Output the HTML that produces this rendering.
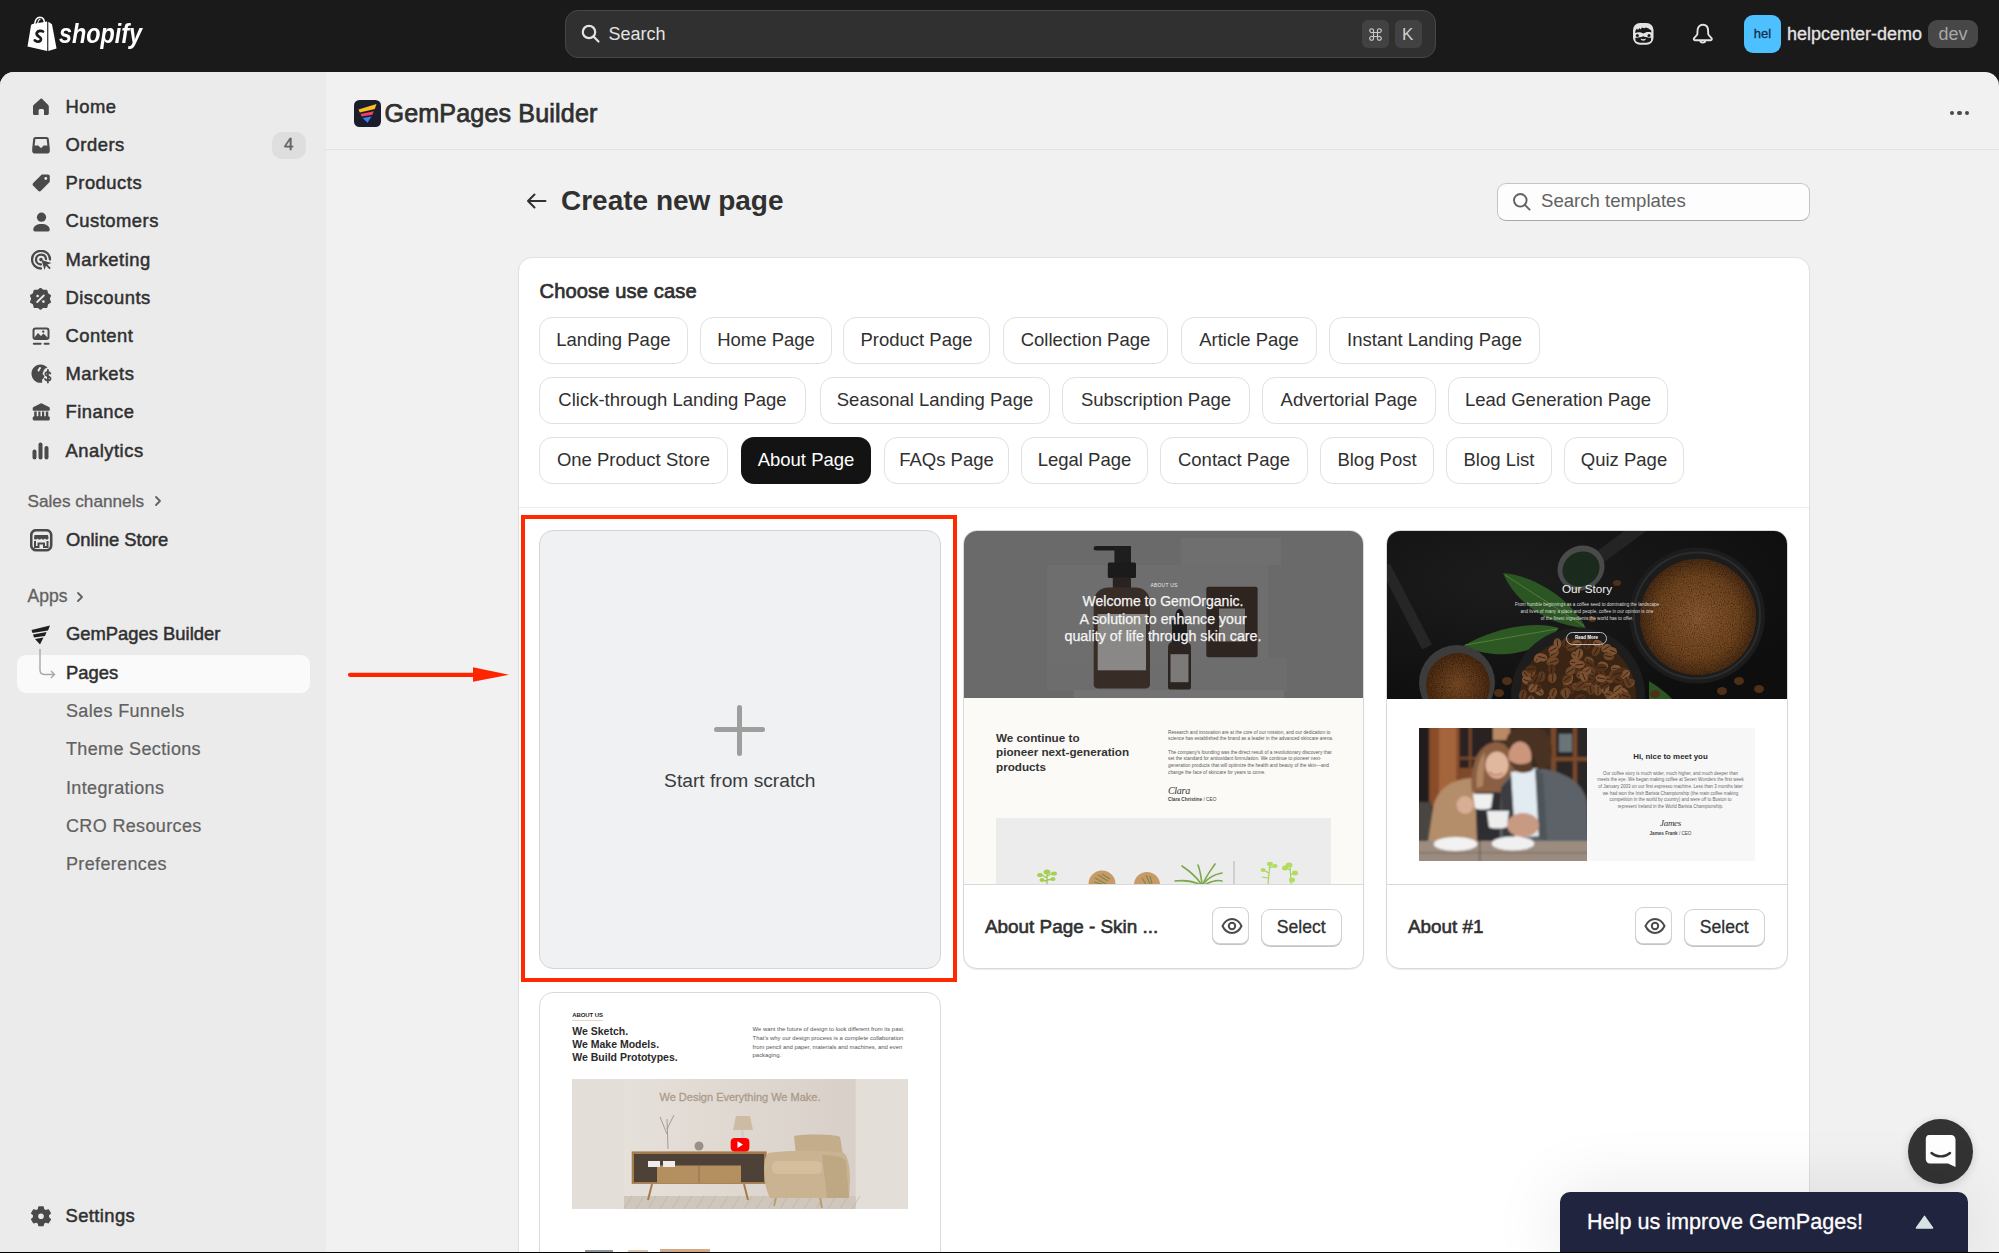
<!DOCTYPE html><html><head><meta charset="utf-8"><style>
html,body{margin:0;padding:0;width:1999px;height:1253px;overflow:hidden;background:#1a1a1a;font-family:"Liberation Sans",sans-serif;}
.t{position:absolute;white-space:nowrap;line-height:1;}
svg{position:absolute;overflow:hidden}
</style></head><body>
<div style="position:absolute;left:0px;top:72px;width:1999px;height:1180px;background:#f1f1f1;border-radius:14px 14px 0 0;overflow:hidden"></div>
<div style="position:absolute;left:0px;top:72px;width:326px;height:1180px;background:#ebebeb;border-radius:14px 0 0 0"></div>
<svg style="left:27px;top:16px" width="31" height="36" viewBox="0 0 31 36">
<path d="M0.5 30.5 L4 9.5 C4.2 8.6 4.8 8.2 5.6 8 L20.2 5.5 L20.2 35 Z" fill="#fff"/>
<path d="M21.3 5.8 L25 8.2 L29.5 32.5 L21.3 35 Z" fill="#fff"/>
<path d="M7.5 9 C8 4 10 1.2 13 1.2 C15.8 1.2 17.4 3.5 17.8 7.5" stroke="#fff" stroke-width="1.6" fill="none"/>
<path d="M10.5 8.3 C11 5 12 3.2 13.5 3" stroke="#fff" stroke-width="1.2" fill="none"/>
<path d="M16 15.5 C14.5 14.5 11 14.3 9.8 16.8 C8.8 19.3 11.5 20.3 13 21.3 C14.6 22.3 14.2 25.5 11.8 25.7 C10.2 25.8 8.8 25 7.8 24.3" stroke="#1a1a1a" stroke-width="2.7" fill="none" stroke-linecap="round"/>
</svg><div class="t " style="left:59.0px;top:20.2px;font-size:27.5px;font-weight:700;color:#fff;font-style:italic;transform:scaleX(0.85);transform-origin:0 0">shopify</div>
<div style="position:absolute;left:564.8px;top:9.5px;width:871px;height:48.5px;box-sizing:border-box;background:#303030;border:1.5px solid #474747;border-radius:13px"></div>
<svg style="left:581px;top:24px" width="20" height="20" viewBox="0 0 20 20"><circle cx="8" cy="8" r="6.2" stroke="#e3e3e3" stroke-width="2.2" fill="none"/><path d="M12.5 12.5 L17.5 17.5" stroke="#e3e3e3" stroke-width="2.2" stroke-linecap="round"/></svg><div class="t " style="left:608.5px;top:25.3px;font-size:18px;font-weight:400;color:#e3e3e3;">Search</div>
<div style="position:absolute;left:1362px;top:20px;width:27px;height:28px;background:#424242;border-radius:6px"></div>
<div style="position:absolute;left:1395px;top:20px;width:27px;height:28px;background:#424242;border-radius:6px"></div>
<svg style="left:1369px;top:27.5px" width="13" height="13" viewBox="0 0 13 13"><path d="M4.5 4.5 H8.5 V8.5 H4.5 Z M4.5 4.5 V3 A1.9 1.9 0 1 0 3 4.5 H4.5 M8.5 4.5 V3 A1.9 1.9 0 1 1 10 4.5 H8.5 M4.5 8.5 V10 A1.9 1.9 0 1 1 3 8.5 H4.5 M8.5 8.5 V10 A1.9 1.9 0 1 0 10 8.5 H8.5" stroke="#c8c8c8" stroke-width="1.2" fill="none"/></svg><div class="t " style="left:1402.0px;top:26.1px;font-size:17px;font-weight:400;color:#cfcfcf;">K</div>
<svg style="left:1633px;top:23px" width="21" height="22" viewBox="0 0 21 22">
<rect x="0" y="0" width="20.5" height="21.7" rx="7" fill="#e3e3e3"/>
<path d="M2.2 10 L2.5 7.5 L4 5.5 L5 7 L6.5 5 L7.5 6.5 L9 4.5 L11 5.2 L13 4.6 L15.5 5.5 L18.3 7.5 L18.3 9.5 C15 8.5 12.5 9.2 10.3 10.6 C8 9.2 5 8.8 2.2 10 Z" fill="#1a1a1a"/>
<circle cx="4.4" cy="12.6" r="1.5" fill="#1a1a1a"/><circle cx="16" cy="12.6" r="1.5" fill="#1a1a1a"/>
<path d="M2.3 14.8 C5 14.6 8 14.2 10.3 13.2 C12.5 14.2 15.5 14.6 18.2 14.8 L18 17.5 C17 19.3 15 19.8 10.3 19.8 C5.5 19.8 3.5 19.3 2.5 17.5 Z" fill="#1a1a1a"/>
<path d="M7.5 15.6 C9.5 16.3 11 16.3 13 15.6 C12.5 17.3 11.5 17.8 10.3 17.8 C9 17.8 8 17.3 7.5 15.6 Z" fill="#e3e3e3"/>
</svg><svg style="left:1692px;top:23px" width="22" height="23" viewBox="0 0 22 23">
<path d="M5.5 8 C5.5 4 7.8 1.8 10.8 1.8 C13.8 1.8 16.1 4 16.1 8 L16.3 11.5 L19.5 15.2 C20.2 16 19.8 17.2 18.7 17.2 L2.9 17.2 C1.8 17.2 1.4 16 2.1 15.2 L5.3 11.5 Z" fill="none" stroke="#e3e3e3" stroke-width="1.9" stroke-linejoin="round"/>
<path d="M8.3 17.5 C8.3 20.3 13.3 20.3 13.3 17.5" fill="none" stroke="#e3e3e3" stroke-width="1.9"/>
</svg><div style="position:absolute;left:1744px;top:15px;width:37px;height:38px;background:#4dc0ff;border-radius:9px"></div>
<div class="t" style="left:1462.5px;width:600px;text-align:center;top:27.3px;font-size:13px;font-weight:400;color:#12304a;-webkit-text-stroke:0.3px #12304a">hel</div>
<div class="t " style="left:1787.0px;top:24.8px;font-size:18px;font-weight:400;color:#e3e3e3;-webkit-text-stroke:0.3px #e3e3e3">helpcenter-demo</div>
<div style="position:absolute;left:1928px;top:20px;width:50px;height:28px;background:#474747;border-radius:9px"></div>
<div class="t" style="left:1653.0px;width:600px;text-align:center;top:24.5px;font-size:18px;font-weight:400;color:#a8a8a8;">dev</div>
<div class="t " style="left:65.5px;top:97.8px;font-size:18.4px;font-weight:400;color:#303030;-webkit-text-stroke:0.5px #303030;letter-spacing:0.5px">Home</div>
<svg style="left:32.4px;top:98px" width="22" height="22" viewBox="0 0 22 22"><path d="M8.6 0.8 C9 0.4 9.6 0.4 10 0.8 L16.2 7 C16.6 7.4 16.8 8 16.8 8.6 L16.8 15.5 C16.8 16.4 16.1 17 15.3 17 L12 17 L12 12.5 C12 11.6 11.2 11 10.3 11 L8.3 11 C7.4 11 6.6 11.6 6.6 12.5 L6.6 17 L2.5 17 C1.6 17 1 16.4 1 15.5 L1 8.6 C1 8 1.2 7.4 1.6 7 Z" fill="#4a4a4a"/></svg>
<div class="t " style="left:65.5px;top:136.0px;font-size:18.4px;font-weight:400;color:#303030;-webkit-text-stroke:0.5px #303030;letter-spacing:0.5px">Orders</div>
<svg style="left:32px;top:136px" width="22" height="22" viewBox="0 0 22 22"><path d="M3.5 1 L14.5 1 C15.8 1 16.6 1.8 16.8 3 L17.8 12.5 L17.8 15 C17.8 16.4 16.9 17.5 15.5 17.5 L2.5 17.5 C1.1 17.5 0.2 16.4 0.2 15 L0.2 12.5 L1.2 3 C1.4 1.8 2.2 1 3.5 1 Z M3.4 3 L2.6 9.5 L6 9.5 C6.6 9.5 7 9.9 7.3 10.5 C7.8 11.4 8.4 11.8 9 11.8 C9.6 11.8 10.2 11.4 10.7 10.5 C11 9.9 11.4 9.5 12 9.5 L15.4 9.5 L14.6 3 Z" fill="#4a4a4a" fill-rule="evenodd"/></svg>
<div class="t " style="left:65.5px;top:174.2px;font-size:18.4px;font-weight:400;color:#303030;-webkit-text-stroke:0.5px #303030;letter-spacing:0.5px">Products</div>
<svg style="left:32px;top:173.8px" width="22" height="22" viewBox="0 0 22 22"><path d="M11 0.5 L16 0.5 C17 0.5 17.8 1.3 17.8 2.3 L17.8 7 C17.8 7.6 17.6 8.1 17.2 8.5 L9 16.8 C8.2 17.6 7 17.6 6.2 16.8 L1.2 11.8 C0.4 11 0.4 9.8 1.2 9 L9.5 0.8 C9.9 0.5 10.4 0.5 11 0.5 Z" fill="#4a4a4a"/><circle cx="13.8" cy="4.5" r="1.4" fill="#ebebeb"/></svg>
<div class="t " style="left:65.5px;top:212.4px;font-size:18.4px;font-weight:400;color:#303030;-webkit-text-stroke:0.5px #303030;letter-spacing:0.5px">Customers</div>
<svg style="left:32.5px;top:211.5px" width="22" height="22" viewBox="0 0 22 22"><circle cx="8.5" cy="5.2" r="4.6" fill="#4a4a4a"/><path d="M0.3 17.5 C0.3 14 4 12 8.5 12 C13 12 16.7 14 16.7 17.5 C16.7 18.8 16.2 19.5 15 19.5 L2 19.5 C0.8 19.5 0.3 18.8 0.3 17.5 Z" fill="#4a4a4a"/></svg>
<div class="t " style="left:65.5px;top:250.6px;font-size:18.4px;font-weight:400;color:#303030;-webkit-text-stroke:0.5px #303030;letter-spacing:0.5px">Marketing</div>
<svg style="left:30.5px;top:250px" width="22" height="22" viewBox="0 0 22 22"><path d="M10 18.5 C5 18.5 1 14.5 1 9.5 C1 4.5 5 0.8 10 0.8 C15 0.8 19 4.5 19 9.5" fill="none" stroke="#4a4a4a" stroke-width="2.3" stroke-linecap="round"/><path d="M10 14.5 C7.2 14.5 5 12.3 5 9.5 C5 6.8 7.2 4.7 10 4.7 C12.6 4.7 14.7 6.5 15 9" fill="none" stroke="#4a4a4a" stroke-width="2.3" stroke-linecap="round"/><circle cx="10" cy="9.6" r="1.8" fill="#4a4a4a"/><path d="M10.5 10 L20.5 13 L16.3 14.5 L19.8 18 L18.5 19.3 L15 15.8 L13.5 20 Z" fill="#4a4a4a"/></svg>
<div class="t " style="left:65.5px;top:288.8px;font-size:18.4px;font-weight:400;color:#303030;-webkit-text-stroke:0.5px #303030;letter-spacing:0.5px">Discounts</div>
<svg style="left:30px;top:287.5px" width="22" height="22" viewBox="0 0 22 22"><path d="M10.5 0.5 L13.2 2.6 L16.6 2.4 L17.4 5.7 L20.3 7.6 L19 10.8 L20.3 14 L17.4 15.9 L16.6 19.2 L13.2 19 L10.5 21.1 L7.8 19 L4.4 19.2 L3.6 15.9 L0.7 14 L2 10.8 L0.7 7.6 L3.6 5.7 L4.4 2.4 L7.8 2.6 Z" fill="#4a4a4a" stroke="#4a4a4a" stroke-width="1.5" stroke-linejoin="round"/><path d="M7.2 14 L13.8 7.5" stroke="#ebebeb" stroke-width="1.8" stroke-linecap="round"/><circle cx="7.6" cy="8" r="1.3" fill="#ebebeb"/><circle cx="13.4" cy="13.6" r="1.3" fill="#ebebeb"/></svg>
<div class="t " style="left:65.5px;top:327.0px;font-size:18.4px;font-weight:400;color:#303030;-webkit-text-stroke:0.5px #303030;letter-spacing:0.5px">Content</div>
<svg style="left:32px;top:327px" width="22" height="22" viewBox="0 0 22 22"><rect x="0.5" y="0.5" width="17" height="12.5" rx="3" fill="#4a4a4a"/><path d="M2.5 10.5 L6 6 L9 9 L11.5 6.5 L15.5 10.5 L15.5 3.5 C15.5 3 15 2.5 14.5 2.5 L3.5 2.5 C3 2.5 2.5 3 2.5 3.5 Z" fill="#ebebeb"/><circle cx="11.2" cy="4.6" r="1.2" fill="#4a4a4a"/><rect x="0.8" y="15.7" width="8.8" height="2" rx="1" fill="#4a4a4a"/><rect x="11.6" y="15.7" width="6" height="2" rx="1" fill="#4a4a4a"/></svg>
<div class="t " style="left:65.5px;top:365.2px;font-size:18.4px;font-weight:400;color:#303030;-webkit-text-stroke:0.5px #303030;letter-spacing:0.5px">Markets</div>
<svg style="left:30.5px;top:363.5px" width="22" height="22" viewBox="0 0 22 22"><path d="M9.5 0.5 C12.5 0.5 15 1.8 16.5 4 L14 4.5 L12.5 7 L11.5 10 L13.5 12 L12.5 14.5 L11 15.8 L11.3 18.6 C10.7 18.8 10.1 18.8 9.5 18.8 C4.5 18.8 0.5 14.8 0.5 9.7 C0.5 4.5 4.5 0.5 9.5 0.5 Z" fill="#4a4a4a"/><path d="M9 4 L7.5 6.5" stroke="#ebebeb" stroke-width="2" stroke-linecap="round"/><path d="M19.3 9.5 C18.8 8.5 17.8 8 16.7 8 C15.3 8 14.3 8.8 14.3 10 C14.3 12.5 19.5 11.7 19.5 14.5 C19.5 15.8 18.3 16.6 16.8 16.6 C15.5 16.6 14.5 16 14 15 M16.9 6 L16.9 18.5" stroke="#4a4a4a" stroke-width="1.8" fill="none" stroke-linecap="round"/></svg>
<div class="t " style="left:65.5px;top:403.4px;font-size:18.4px;font-weight:400;color:#303030;-webkit-text-stroke:0.5px #303030;letter-spacing:0.5px">Finance</div>
<svg style="left:32px;top:402.5px" width="22" height="22" viewBox="0 0 22 22"><path d="M8.6 0.5 C9 0.3 9.5 0.3 9.9 0.5 L17 4 C17.5 4.3 17.8 4.8 17.8 5.3 L17.8 6.7 C17.8 7.3 17.3 7.8 16.7 7.8 L1.8 7.8 C1.2 7.8 0.7 7.3 0.7 6.7 L0.7 5.3 C0.7 4.8 1 4.3 1.5 4 Z" fill="#4a4a4a"/><rect x="2.2" y="8.5" width="2.5" height="5.5" fill="#4a4a4a"/><rect x="6.3" y="8.5" width="2.2" height="5.5" fill="#4a4a4a"/><rect x="10" y="8.5" width="2.2" height="5.5" fill="#4a4a4a"/><rect x="13.8" y="8.5" width="2.5" height="5.5" fill="#4a4a4a"/><rect x="0.7" y="13.3" width="17.1" height="4.3" rx="1.5" fill="#4a4a4a"/></svg>
<div class="t " style="left:65.5px;top:441.6px;font-size:18.4px;font-weight:400;color:#303030;-webkit-text-stroke:0.5px #303030;letter-spacing:0.5px">Analytics</div>
<svg style="left:31.8px;top:441.5px" width="22" height="22" viewBox="0 0 22 22"><rect x="0.5" y="7.5" width="4" height="10" rx="2" fill="#4a4a4a"/><rect x="6.5" y="0.5" width="4" height="17" rx="2" fill="#4a4a4a"/><rect x="12.5" y="4" width="4" height="13.5" rx="2" fill="#4a4a4a"/></svg>
<div style="position:absolute;left:272px;top:132px;width:33.5px;height:27px;background:#dedede;border-radius:10px"></div>
<div class="t" style="left:-11.3px;width:600px;text-align:center;top:136.4px;font-size:17px;font-weight:400;color:#616161;-webkit-text-stroke:0.4px #616161">4</div>
<div class="t " style="left:27.5px;top:492.7px;font-size:17.2px;font-weight:400;color:#616161;-webkit-text-stroke:0.3px #616161;">Sales channels</div>
<svg style="left:153px;top:494px" width="10" height="14" viewBox="0 0 10 14"><path d="M3 3 L7 7 L3 11" stroke="#616161" stroke-width="1.8" fill="none" stroke-linecap="round" stroke-linejoin="round"/></svg>
<svg style="left:29.5px;top:528.5px" width="23" height="23" viewBox="0 0 23 23"><rect x="1.2" y="1.2" width="20" height="20" rx="5" fill="none" stroke="#4a4a4a" stroke-width="2.6"/><path d="M4.5 6 L18 6 L18.5 9 C18.5 10 17.7 10.6 16.8 10.6 C15.8 10.6 15.2 10 15 9.3 C14.7 10 14 10.6 13 10.6 C12 10.6 11.5 10 11.3 9.3 C11 10 10.4 10.6 9.5 10.6 C8.5 10.6 7.8 10 7.5 9.3 C7.3 10 6.6 10.6 5.7 10.6 C4.8 10.6 4 10 4 9 Z" fill="#4a4a4a"/><path d="M5 12 L5 18 L8.5 18 L8.5 14.5 L14 14.5 L14 18 L17.5 18 L17.5 12" fill="none" stroke="#4a4a4a" stroke-width="2"/></svg>
<div class="t " style="left:66.0px;top:530.6px;font-size:18.4px;font-weight:400;color:#303030;-webkit-text-stroke:0.5px #303030;">Online Store</div>
<div class="t " style="left:27.5px;top:588.4px;font-size:17.5px;font-weight:400;color:#616161;-webkit-text-stroke:0.3px #616161;">Apps</div>
<svg style="left:75px;top:590px" width="10" height="14" viewBox="0 0 10 14"><path d="M3 3 L7 7 L3 11" stroke="#616161" stroke-width="1.8" fill="none" stroke-linecap="round" stroke-linejoin="round"/></svg>
<svg style="left:31px;top:625px" width="20" height="20" viewBox="0 0 20 20"><path d="M0.5 5 L19 0.5 L17 5.5 L1.5 8 Z" fill="#1f1f1f"/><path d="M2 9.5 L15.5 7 L14 11 L3 12.5 Z" fill="#1f1f1f"/><path d="M4 14 L12.5 12.5 L9 19.5 Z" fill="#1f1f1f"/></svg>
<div class="t " style="left:66.0px;top:625.2px;font-size:18.4px;font-weight:400;color:#303030;-webkit-text-stroke:0.5px #303030;">GemPages Builder</div>
<div style="position:absolute;left:16.5px;top:654.5px;width:293.5px;height:38px;background:#fafafa;border-radius:9px"></div>
<svg style="left:38px;top:648px" width="20" height="32" viewBox="0 0 20 32"><path d="M2 1 L2 22 C2 25 3.5 26.5 6.5 26.5 L16 26.5" stroke="#a6a6a6" stroke-width="1.4" fill="none"/><path d="M13 23 L16.5 26.5 L13 30" stroke="#a6a6a6" stroke-width="1.4" fill="none"/></svg>
<div class="t " style="left:66.0px;top:663.6px;font-size:18.4px;font-weight:400;color:#303030;-webkit-text-stroke:0.5px #303030;">Pages</div>
<div class="t " style="left:66.0px;top:702.4px;font-size:18px;font-weight:400;color:#616161;letter-spacing:0.35px;-webkit-text-stroke:0.2px #616161">Sales Funnels</div>
<div class="t " style="left:66.0px;top:740.4px;font-size:18px;font-weight:400;color:#616161;letter-spacing:0.35px;-webkit-text-stroke:0.2px #616161">Theme Sections</div>
<div class="t " style="left:66.0px;top:778.5px;font-size:18px;font-weight:400;color:#616161;letter-spacing:0.35px;-webkit-text-stroke:0.2px #616161">Integrations</div>
<div class="t " style="left:66.0px;top:816.5px;font-size:18px;font-weight:400;color:#616161;letter-spacing:0.35px;-webkit-text-stroke:0.2px #616161">CRO Resources</div>
<div class="t " style="left:66.0px;top:854.6px;font-size:18px;font-weight:400;color:#616161;letter-spacing:0.35px;-webkit-text-stroke:0.2px #616161">Preferences</div>
<svg style="left:30px;top:1206px" width="22" height="22" viewBox="0 0 22 22"><path d="M9 1 L13 1 L13.6 3.6 L15.8 4.8 L18.3 3.9 L20.3 7.3 L18.3 9 L18.3 11.5 L20.3 13.3 L18.3 16.7 L15.8 15.8 L13.6 17 L13 19.6 L9 19.6 L8.4 17 L6.2 15.8 L3.7 16.7 L1.7 13.3 L3.7 11.5 L3.7 9 L1.7 7.3 L3.7 3.9 L6.2 4.8 L8.4 3.6 Z" fill="#4a4a4a" stroke="#4a4a4a" stroke-width="1.5" stroke-linejoin="round"/><circle cx="11" cy="10.3" r="2.8" fill="#ebebeb"/></svg>
<div class="t " style="left:65.5px;top:1206.9px;font-size:18.4px;font-weight:400;color:#303030;-webkit-text-stroke:0.5px #303030;letter-spacing:0.4px">Settings</div>
<div style="position:absolute;left:325px;top:148.5px;width:1674px;height:1px;background:#e3e3e3"></div>
<svg style="left:353.5px;top:99.5px" width="27" height="27" viewBox="0 0 27 27"><rect width="27" height="27" rx="5.5" fill="#1a1d2b"/><path d="M4.5 9.5 L22.5 4 L20.8 9 L5.8 12.6 Z" fill="#fbbf24"/><path d="M6.5 14 L19.7 11.2 L18.5 14.8 L7.6 16.6 Z" fill="#f43f5e"/><path d="M8.7 18 L17.5 16.6 L13.5 22.8 Z" fill="#3b82f6"/></svg>
<div class="t " style="left:384.5px;top:100.8px;font-size:25.1px;font-weight:400;color:#303030;-webkit-text-stroke:0.75px #303030;letter-spacing:0.15px">GemPages Builder</div>
<div style="position:absolute;left:1949.8px;top:110.7px;width:4.5px;height:4.5px;background:#4a4a4a;border-radius:50%"></div>
<div style="position:absolute;left:1957.3px;top:110.7px;width:4.5px;height:4.5px;background:#4a4a4a;border-radius:50%"></div>
<div style="position:absolute;left:1964.8px;top:110.7px;width:4.5px;height:4.5px;background:#4a4a4a;border-radius:50%"></div>
<svg style="left:526px;top:193px" width="21" height="16" viewBox="0 0 21 16"><path d="M19.5 8 L2 8 M8.5 1.5 L2 8 L8.5 14.5" stroke="#303030" stroke-width="2" fill="none" stroke-linecap="round" stroke-linejoin="round"/></svg>
<div class="t " style="left:561.0px;top:187.1px;font-size:28px;font-weight:700;color:#303030;letter-spacing:0px">Create new page</div>
<div style="position:absolute;left:1496.5px;top:182.5px;width:313px;height:38px;box-sizing:border-box;background:#fdfdfd;border:1.3px solid #c4c4c4;border-bottom-color:#a8a8a8;border-radius:9px"></div>
<svg style="left:1512px;top:191.5px" width="20" height="20" viewBox="0 0 20 20"><circle cx="8.3" cy="8.3" r="6.3" stroke="#616161" stroke-width="1.9" fill="none"/><path d="M12.8 12.8 L17.6 17.6" stroke="#616161" stroke-width="1.9" stroke-linecap="round"/></svg>
<div class="t " style="left:1541.0px;top:192.1px;font-size:18.6px;font-weight:400;color:#616161;">Search templates</div>
<div style="position:absolute;left:517.5px;top:256.5px;width:1292px;height:1100px;box-sizing:border-box;background:#fff;border:1px solid #e0e0e0;border-radius:14px;box-shadow:0 1px 2px rgba(0,0,0,0.04)"></div>
<div class="t " style="left:539.5px;top:281.3px;font-size:20.1px;font-weight:400;color:#303030;-webkit-text-stroke:0.7px #303030;letter-spacing:0.13px">Choose use case</div>
<div style="position:absolute;left:539px;top:316.5px;width:148.79999999999995px;height:47.5px;box-sizing:border-box;background:#fff;border:1.5px solid #e1e1e1;border-radius:13px"></div>
<div class="t" style="left:539px;width:148.79999999999995px;text-align:center;top:331.1px;font-size:18.5px;color:#303030">Landing Page</div>
<div style="position:absolute;left:700px;top:316.5px;width:132px;height:47.5px;box-sizing:border-box;background:#fff;border:1.5px solid #e1e1e1;border-radius:13px"></div>
<div class="t" style="left:700px;width:132px;text-align:center;top:331.1px;font-size:18.5px;color:#303030">Home Page</div>
<div style="position:absolute;left:843px;top:316.5px;width:147px;height:47.5px;box-sizing:border-box;background:#fff;border:1.5px solid #e1e1e1;border-radius:13px"></div>
<div class="t" style="left:843px;width:147px;text-align:center;top:331.1px;font-size:18.5px;color:#303030">Product Page</div>
<div style="position:absolute;left:1003px;top:316.5px;width:165px;height:47.5px;box-sizing:border-box;background:#fff;border:1.5px solid #e1e1e1;border-radius:13px"></div>
<div class="t" style="left:1003px;width:165px;text-align:center;top:331.1px;font-size:18.5px;color:#303030">Collection Page</div>
<div style="position:absolute;left:1181px;top:316.5px;width:136px;height:47.5px;box-sizing:border-box;background:#fff;border:1.5px solid #e1e1e1;border-radius:13px"></div>
<div class="t" style="left:1181px;width:136px;text-align:center;top:331.1px;font-size:18.5px;color:#303030">Article Page</div>
<div style="position:absolute;left:1329px;top:316.5px;width:211px;height:47.5px;box-sizing:border-box;background:#fff;border:1.5px solid #e1e1e1;border-radius:13px"></div>
<div class="t" style="left:1329px;width:211px;text-align:center;top:331.1px;font-size:18.5px;color:#303030">Instant Landing Page</div>
<div style="position:absolute;left:539px;top:376.5px;width:267px;height:47.5px;box-sizing:border-box;background:#fff;border:1.5px solid #e1e1e1;border-radius:13px"></div>
<div class="t" style="left:539px;width:267px;text-align:center;top:391.1px;font-size:18.5px;color:#303030">Click-through Landing Page</div>
<div style="position:absolute;left:820px;top:376.5px;width:230px;height:47.5px;box-sizing:border-box;background:#fff;border:1.5px solid #e1e1e1;border-radius:13px"></div>
<div class="t" style="left:820px;width:230px;text-align:center;top:391.1px;font-size:18.5px;color:#303030">Seasonal Landing Page</div>
<div style="position:absolute;left:1062px;top:376.5px;width:188px;height:47.5px;box-sizing:border-box;background:#fff;border:1.5px solid #e1e1e1;border-radius:13px"></div>
<div class="t" style="left:1062px;width:188px;text-align:center;top:391.1px;font-size:18.5px;color:#303030">Subscription Page</div>
<div style="position:absolute;left:1262px;top:376.5px;width:174px;height:47.5px;box-sizing:border-box;background:#fff;border:1.5px solid #e1e1e1;border-radius:13px"></div>
<div class="t" style="left:1262px;width:174px;text-align:center;top:391.1px;font-size:18.5px;color:#303030">Advertorial Page</div>
<div style="position:absolute;left:1448px;top:376.5px;width:220px;height:47.5px;box-sizing:border-box;background:#fff;border:1.5px solid #e1e1e1;border-radius:13px"></div>
<div class="t" style="left:1448px;width:220px;text-align:center;top:391.1px;font-size:18.5px;color:#303030">Lead Generation Page</div>
<div style="position:absolute;left:539px;top:436.5px;width:189px;height:47.5px;box-sizing:border-box;background:#fff;border:1.5px solid #e1e1e1;border-radius:13px"></div>
<div class="t" style="left:539px;width:189px;text-align:center;top:451.1px;font-size:18.5px;color:#303030">One Product Store</div>
<div style="position:absolute;left:741px;top:436.5px;width:130px;height:47.5px;box-sizing:border-box;background:#131313;border-radius:13px"></div>
<div class="t" style="left:741px;width:130px;text-align:center;top:451.1px;font-size:18.5px;color:#fff">About Page</div>
<div style="position:absolute;left:884px;top:436.5px;width:125px;height:47.5px;box-sizing:border-box;background:#fff;border:1.5px solid #e1e1e1;border-radius:13px"></div>
<div class="t" style="left:884px;width:125px;text-align:center;top:451.1px;font-size:18.5px;color:#303030">FAQs Page</div>
<div style="position:absolute;left:1021px;top:436.5px;width:127px;height:47.5px;box-sizing:border-box;background:#fff;border:1.5px solid #e1e1e1;border-radius:13px"></div>
<div class="t" style="left:1021px;width:127px;text-align:center;top:451.1px;font-size:18.5px;color:#303030">Legal Page</div>
<div style="position:absolute;left:1160px;top:436.5px;width:148px;height:47.5px;box-sizing:border-box;background:#fff;border:1.5px solid #e1e1e1;border-radius:13px"></div>
<div class="t" style="left:1160px;width:148px;text-align:center;top:451.1px;font-size:18.5px;color:#303030">Contact Page</div>
<div style="position:absolute;left:1320px;top:436.5px;width:114px;height:47.5px;box-sizing:border-box;background:#fff;border:1.5px solid #e1e1e1;border-radius:13px"></div>
<div class="t" style="left:1320px;width:114px;text-align:center;top:451.1px;font-size:18.5px;color:#303030">Blog Post</div>
<div style="position:absolute;left:1446px;top:436.5px;width:106px;height:47.5px;box-sizing:border-box;background:#fff;border:1.5px solid #e1e1e1;border-radius:13px"></div>
<div class="t" style="left:1446px;width:106px;text-align:center;top:451.1px;font-size:18.5px;color:#303030">Blog List</div>
<div style="position:absolute;left:1564px;top:436.5px;width:120px;height:47.5px;box-sizing:border-box;background:#fff;border:1.5px solid #e1e1e1;border-radius:13px"></div>
<div class="t" style="left:1564px;width:120px;text-align:center;top:451.1px;font-size:18.5px;color:#303030">Quiz Page</div>
<div style="position:absolute;left:518.5px;top:506.5px;width:1290px;height:1px;background:#ececec"></div>
<div style="position:absolute;left:521px;top:515px;width:436px;height:466.5px;box-sizing:border-box;border:4.3px solid #ff2a00"></div>
<div style="position:absolute;left:539px;top:529.5px;width:401.5px;height:439px;box-sizing:border-box;background:#f0f1f3;border:1.3px solid #d4d5d7;border-radius:14px"></div>
<div style="position:absolute;left:737.3px;top:704.5px;width:5px;height:51px;background:#9e9e9e;border-radius:3px"></div>
<div style="position:absolute;left:714px;top:727.2px;width:51px;height:5px;background:#9e9e9e;border-radius:3px"></div>
<div class="t" style="left:439.8px;width:600px;text-align:center;top:770.8px;font-size:19.2px;font-weight:400;color:#3a3a3a;">Start from scratch</div>
<svg style="left:340px;top:660px" width="180" height="30" viewBox="0 0 180 30"><path d="M10 14.8 L136 14.8" stroke="#ff2400" stroke-width="4.2" stroke-linecap="round"/><path d="M133 7.3 L169 14.8 L133 21.7 Z" fill="#ff2400"/></svg>
<div style="position:absolute;left:963px;top:529.5px;width:401px;height:439px;box-sizing:border-box;border:1.2px solid #d9d9d9;border-radius:14px;background:#fff;overflow:hidden;box-shadow:0 1px 1px rgba(0,0,0,0.08)"><div style="position:absolute;left:0.0px;top:0.0px;width:401px;height:168.5px;background:#6a6a6a"></div><div style="position:absolute;left:83.0px;top:34.5px;width:221px;height:93px;background:#6e6e6e"></div><div style="position:absolute;left:217.0px;top:7.5px;width:100px;height:27px;background:#6f6f6f"></div><div style="position:absolute;left:83.0px;top:127.5px;width:240px;height:33px;background:#6d6d6d"></div><div style="position:absolute;left:110.0px;top:159.5px;width:210px;height:8.5px;background:#737373"></div><svg style="left:0;top:0" width="401" height="168.5" viewBox="963 529.5 401 168.5"><path d="M1095 544.5 L1130 544.5 L1130 549 L1095 549 C1093.5 549 1092.7 548 1092.7 546.7 C1092.7 545.4 1093.5 544.5 1095 544.5 Z" fill="#1c1c1c"/><rect x="1113.4" y="545" width="16.6" height="17" fill="#1e1e1e"/><rect x="1106.8" y="561" width="28.2" height="15.5" rx="1.5" fill="#1b1b1b"/><rect x="1111.8" y="576" width="18.2" height="11" fill="#2a2220"/><path d="M1092.7 601 C1092.7 592 1099 586 1108 586 L1134 586 C1143 586 1149 592 1149 601 L1149 683 C1149 685.5 1147 687 1144.5 687 L1097 687 C1094.5 687 1092.7 685.5 1092.7 683 Z" fill="#382c27"/><rect x="1096.7" y="612.5" width="48.3" height="56.3" fill="#8a8886"/><path d="M1174 618.5 C1174 611 1176 607.4 1178.5 607.4 C1181 607.4 1183 611 1183 618.5 Z" fill="#1a1a1a"/><rect x="1171" y="618.5" width="15" height="22.5" rx="1" fill="#1c1c1c"/><path d="M1167 646 C1167 642.5 1169 640.6 1172 640.6 L1185 640.6 C1188 640.6 1190 642.5 1190 646 L1190 686 C1190 687.2 1189 688 1188 688 L1169 688 C1168 688 1167 687.2 1167 686 Z" fill="#2b2421"/><rect x="1169.5" y="652.7" width="18" height="28" fill="#7c7a78"/><rect x="1205.3" y="585.3" width="51.3" height="70.4" rx="2" fill="#2e2420"/><rect x="1218" y="607" width="26" height="33" fill="#747270"/></svg></div>
<div class="t" style="left:964.0px;width:400px;text-align:center;top:583.2px;font-size:5px;font-weight:400;color:#e8e8e8;letter-spacing:0.2px">ABOUT US</div>
<div class="t" style="left:963.0px;width:400px;text-align:center;top:594.3px;font-size:14px;font-weight:400;color:#f4f4f4;-webkit-text-stroke:0.25px #f4f4f4">Welcome to GemOrganic.</div>
<div class="t" style="left:963.0px;width:400px;text-align:center;top:611.8px;font-size:14.2px;font-weight:400;color:#f4f4f4;-webkit-text-stroke:0.25px #f4f4f4">A solution to enhance your</div>
<div class="t" style="left:963.0px;width:400px;text-align:center;top:628.6px;font-size:14.3px;font-weight:400;color:#f4f4f4;-webkit-text-stroke:0.25px #f4f4f4">quality of life through skin care.</div>
<div style="position:absolute;left:964.2px;top:697.5px;width:398.6px;height:186.5px;background:#fbfaf7"></div>
<div class="t" style="left:996.0px;top:731.9px;font-size:11.7px;font-weight:700;color:#333;">We continue to</div>
<div class="t" style="left:996.0px;top:746.4px;font-size:11.7px;font-weight:700;color:#333;">pioneer next-generation</div>
<div class="t" style="left:996.0px;top:760.5px;font-size:11.7px;font-weight:700;color:#333;">products</div>
<div class="t" style="left:1168.0px;top:730.6px;font-size:4.75px;font-weight:400;color:#5a5a5a;">Research and innovation are at the core of our mission, and our dedication to</div>
<div class="t" style="left:1168.0px;top:737.4px;font-size:4.75px;font-weight:400;color:#5a5a5a;">science has established the brand as a leader in the advanced skincare arena.</div>
<div class="t" style="left:1168.0px;top:750.7px;font-size:4.75px;font-weight:400;color:#5a5a5a;">The company's founding was the direct result of a revolutionary discovery that</div>
<div class="t" style="left:1168.0px;top:757.4px;font-size:4.75px;font-weight:400;color:#5a5a5a;">set the standard for antioxidant formulation. We continue to pioneer next-</div>
<div class="t" style="left:1168.0px;top:764.0px;font-size:4.75px;font-weight:400;color:#5a5a5a;">generation products that will optimize the health and beauty of the skin—and</div>
<div class="t" style="left:1168.0px;top:770.8px;font-size:4.75px;font-weight:400;color:#5a5a5a;">change the face of skincare for years to come.</div>
<div class="t" style="left:1168.0px;top:785.5px;font-size:10px;font-weight:400;color:#333;font-family:'Liberation Serif',serif;font-style:italic;letter-spacing:-0.3px">Clara</div>
<div class="t" style="left:1168.0px;top:798.0px;font-size:4.8px;font-weight:400;color:#444;"><b>Clara Christine</b> / CEO</div>
<div style="position:absolute;left:996px;top:817.7px;width:335px;height:66.5px;background:#ececec"></div>
<svg style="left:996px;top:817.7px" width="335" height="66.5" viewBox="0 0 335 66.5"><g stroke="#9cc850" stroke-width="1.3" fill="none"><path d="M51 66 L51 54 M51 60 L44 56 M51 58 L58 55 M51 63 L45 62 M51 62 L58 61"/></g><g fill="#a4d055"><ellipse cx="51" cy="54" rx="3.5" ry="2.5"/><ellipse cx="44" cy="57" rx="3" ry="2"/><ellipse cx="58" cy="55.5" rx="3" ry="2"/><ellipse cx="46" cy="62" rx="2.5" ry="2"/><ellipse cx="57" cy="61" rx="2.5" ry="2"/></g><circle cx="106" cy="66" r="13.5" fill="#c79a68"/><circle cx="151" cy="67" r="13" fill="#c79a68"/><g stroke="#7e8a4a" stroke-width="1.2"><path d="M99 60 L110 66 M102 57 L112 63 M106 56 L114 61 M98 64 L106 66"/><path d="M146 60 L150 66 M150 57 L154 66 M154 58 L156 66"/></g><g stroke="#7aa84a" stroke-width="1.6" fill="none" stroke-linecap="round"><path d="M205 66 C200 58 192 52 186 48"/><path d="M207 66 C210 58 215 52 219 46"/><path d="M207 66 C212 60 220 56 226 55"/><path d="M203 66 C196 63 188 62 179 63"/><path d="M206 66 C205 58 204 52 202 47"/><path d="M210 66 C216 63 222 62 226 63"/></g><path d="M238 66 L238 43" stroke="#b0b8ae" stroke-width="1"/><g stroke="#a8d458" stroke-width="1.2" fill="none"><path d="M272 66 L274 45 M273 55 L267 52 M273 50 L279 48 M272 60 L266 59"/><path d="M295 66 L294 46 M294 52 L288 48 M294 57 L300 54"/></g><g fill="#b0dc60"><ellipse cx="274" cy="46" rx="3" ry="2.2"/><ellipse cx="267" cy="52" rx="2.5" ry="2"/><ellipse cx="279" cy="48" rx="2.5" ry="2"/><ellipse cx="293" cy="47" rx="3.5" ry="2.5"/><ellipse cx="289" cy="50" rx="3" ry="2.5"/><ellipse cx="299" cy="55" rx="3" ry="2.5"/><ellipse cx="296" cy="62" rx="3" ry="2.5"/></g></svg>
<div style="position:absolute;left:963px;top:884px;width:401px;height:1px;background:#d9d9d9"></div>
<div class="t " style="left:985.0px;top:917.6px;font-size:18.9px;font-weight:400;color:#303030;-webkit-text-stroke:0.6px #303030;">About Page - Skin ...</div>
<div style="position:absolute;left:1212px;top:907.3px;width:37px;height:37px;box-sizing:border-box;background:#fff;border:1.2px solid #d3d3d3;border-radius:8px;box-shadow:0 1px 0 #c4c4c4"></div>
<svg style="left:1220.6px;top:917px" width="22" height="18" viewBox="0 0 22 18"><path d="M1.5 9 C4 3.8 7.3 2 11 2 C14.7 2 18 3.8 20.5 9 C18 14.2 14.7 16 11 16 C7.3 16 4 14.2 1.5 9 Z" stroke="#4a4a4a" stroke-width="2" fill="none" stroke-linejoin="round"/><circle cx="11" cy="9" r="3.2" stroke="#4a4a4a" stroke-width="2" fill="none"/></svg>
<div style="position:absolute;left:1261px;top:909px;width:80.5px;height:37px;box-sizing:border-box;background:#fff;border:1.2px solid #d3d3d3;border-radius:9px;box-shadow:0 1px 0 #c4c4c4"></div>
<div class="t" style="left:1261px;width:80.5px;text-align:center;top:918.7px;font-size:17.6px;color:#303030;-webkit-text-stroke:0.3px #303030">Select</div>
<div style="position:absolute;left:1386px;top:529.5px;width:401.5px;height:439px;box-sizing:border-box;border:1.2px solid #d9d9d9;border-radius:14px;background:#fff;overflow:hidden;box-shadow:0 1px 1px rgba(0,0,0,0.08)"><svg style="left:0;top:0" width="401.5" height="168" viewBox="0 0 401.5 168"><defs><radialGradient id="gr1" cx="0.5" cy="0.5" r="0.5"><stop offset="0" stop-color="#8a5a33"/><stop offset="0.7" stop-color="#70451f"/><stop offset="1" stop-color="#4a2c14"/></radialGradient><radialGradient id="gr2" cx="0.5" cy="0.5" r="0.5"><stop offset="0" stop-color="#7a4c26"/><stop offset="1" stop-color="#4a2a12"/></radialGradient><radialGradient id="bg" cx="0.3" cy="0.3" r="0.8"><stop offset="0" stop-color="#1c1c1c"/><stop offset="1" stop-color="#0e0e0e"/></radialGradient><filter id="grain" x="0" y="0" width="100%" height="100%"><feTurbulence type="fractalNoise" baseFrequency="0.9" numOctaves="2" seed="4" result="n"/><feColorMatrix in="n" type="matrix" values="0 0 0 0 0.1  0 0 0 0 0.05  0 0 0 0 0.02  0 0 0 -1.6 1.0" result="m"/><feComposite in="m" in2="SourceGraphic" operator="in"/><feBlend in2="SourceGraphic" mode="multiply"/></filter></defs><rect width="401.5" height="168" fill="url(#bg)"/><path d="M-2 35 L40 116" stroke="#262626" stroke-width="11"/><path d="M205 32 L255 -5" stroke="#242424" stroke-width="13"/><ellipse cx="194" cy="37" rx="24" ry="22" fill="#4a4a4a" transform="rotate(-30 194 37)"/><ellipse cx="194" cy="38" rx="19" ry="17" fill="#1a2a1c" transform="rotate(-30 194 38)"/><path d="M116 42 C150 45 185 70 199 97 C165 95 130 75 116 42 Z" fill="#2b5522"/><path d="M118 44 L197 95" stroke="#5a8a40" stroke-width="0.8"/><path d="M76 115 C110 95 150 90 172 97 C150 125 110 130 76 115 Z" fill="#2d5824"/><path d="M78 114 L170 98" stroke="#5a8a40" stroke-width="0.8"/><path d="M262 150 C270 155 280 162 285 168 L262 168 Z" fill="#2b5522"/><circle cx="310" cy="84.5" r="68" fill="#1c1c1c"/><circle cx="310" cy="84.5" r="63" fill="none" stroke="#2c2c2c" stroke-width="2"/><circle cx="311" cy="86" r="58" fill="url(#gr1)" filter="url(#grain)"/><circle cx="191" cy="164" r="67" fill="#1d1d1d"/><circle cx="191" cy="165" r="58" fill="#3a2414"/><g transform="translate(180.9 153.8) rotate(3)"><ellipse rx="5.3" ry="3.9" fill="#50301a"/><path d="M-4 0 L4 0" stroke="#2e1a0c" stroke-width="0.8"/></g><g transform="translate(229.4 162.9) rotate(140)"><ellipse rx="5.3" ry="3.9" fill="#50301a"/><path d="M-4 0 L4 0" stroke="#2e1a0c" stroke-width="0.8"/></g><g transform="translate(222.2 148.3) rotate(3)"><ellipse rx="5.3" ry="3.9" fill="#6e4628"/><path d="M-4 0 L4 0" stroke="#2e1a0c" stroke-width="0.8"/></g><g transform="translate(204.0 138.0) rotate(152)"><ellipse rx="5.3" ry="3.9" fill="#50301a"/><path d="M-4 0 L4 0" stroke="#2e1a0c" stroke-width="0.8"/></g><g transform="translate(179.0 111.6) rotate(101)"><ellipse rx="5.3" ry="3.9" fill="#50301a"/><path d="M-4 0 L4 0" stroke="#2e1a0c" stroke-width="0.8"/></g><g transform="translate(211.0 159.4) rotate(93)"><ellipse rx="5.3" ry="3.9" fill="#6e4628"/><path d="M-4 0 L4 0" stroke="#2e1a0c" stroke-width="0.8"/></g><g transform="translate(200.4 113.1) rotate(107)"><ellipse rx="5.3" ry="3.9" fill="#50301a"/><path d="M-4 0 L4 0" stroke="#2e1a0c" stroke-width="0.8"/></g><g transform="translate(154.4 145.6) rotate(104)"><ellipse rx="5.3" ry="3.9" fill="#5e3a20"/><path d="M-4 0 L4 0" stroke="#2e1a0c" stroke-width="0.8"/></g><g transform="translate(229.1 137.8) rotate(7)"><ellipse rx="5.3" ry="3.9" fill="#7c5232"/><path d="M-4 0 L4 0" stroke="#2e1a0c" stroke-width="0.8"/></g><g transform="translate(236.8 161.4) rotate(41)"><ellipse rx="5.3" ry="3.9" fill="#7c5232"/><path d="M-4 0 L4 0" stroke="#2e1a0c" stroke-width="0.8"/></g><g transform="translate(243.0 152.3) rotate(145)"><ellipse rx="5.3" ry="3.9" fill="#6e4628"/><path d="M-4 0 L4 0" stroke="#2e1a0c" stroke-width="0.8"/></g><g transform="translate(185.2 138.9) rotate(146)"><ellipse rx="5.3" ry="3.9" fill="#7c5232"/><path d="M-4 0 L4 0" stroke="#2e1a0c" stroke-width="0.8"/></g><g transform="translate(224.9 119.8) rotate(22)"><ellipse rx="5.3" ry="3.9" fill="#7c5232"/><path d="M-4 0 L4 0" stroke="#2e1a0c" stroke-width="0.8"/></g><g transform="translate(202.2 129.9) rotate(38)"><ellipse rx="5.3" ry="3.9" fill="#6e4628"/><path d="M-4 0 L4 0" stroke="#2e1a0c" stroke-width="0.8"/></g><g transform="translate(199.2 155.6) rotate(157)"><ellipse rx="5.3" ry="3.9" fill="#6e4628"/><path d="M-4 0 L4 0" stroke="#2e1a0c" stroke-width="0.8"/></g><g transform="translate(140.0 147.1) rotate(71)"><ellipse rx="5.3" ry="3.9" fill="#5e3a20"/><path d="M-4 0 L4 0" stroke="#2e1a0c" stroke-width="0.8"/></g><g transform="translate(222.2 163.7) rotate(19)"><ellipse rx="5.3" ry="3.9" fill="#6e4628"/><path d="M-4 0 L4 0" stroke="#2e1a0c" stroke-width="0.8"/></g><g transform="translate(183.0 158.2) rotate(50)"><ellipse rx="5.3" ry="3.9" fill="#50301a"/><path d="M-4 0 L4 0" stroke="#2e1a0c" stroke-width="0.8"/></g><g transform="translate(170.5 112.5) rotate(86)"><ellipse rx="5.3" ry="3.9" fill="#7c5232"/><path d="M-4 0 L4 0" stroke="#2e1a0c" stroke-width="0.8"/></g><g transform="translate(213.2 137.8) rotate(133)"><ellipse rx="5.3" ry="3.9" fill="#50301a"/><path d="M-4 0 L4 0" stroke="#2e1a0c" stroke-width="0.8"/></g><g transform="translate(164.3 130.0) rotate(143)"><ellipse rx="5.3" ry="3.9" fill="#6e4628"/><path d="M-4 0 L4 0" stroke="#2e1a0c" stroke-width="0.8"/></g><g transform="translate(151.4 126.8) rotate(129)"><ellipse rx="5.3" ry="3.9" fill="#7c5232"/><path d="M-4 0 L4 0" stroke="#2e1a0c" stroke-width="0.8"/></g><g transform="translate(231.0 158.4) rotate(140)"><ellipse rx="5.3" ry="3.9" fill="#7c5232"/><path d="M-4 0 L4 0" stroke="#2e1a0c" stroke-width="0.8"/></g><g transform="translate(227.0 166.6) rotate(148)"><ellipse rx="5.3" ry="3.9" fill="#7c5232"/><path d="M-4 0 L4 0" stroke="#2e1a0c" stroke-width="0.8"/></g><g transform="translate(234.6 169.5) rotate(161)"><ellipse rx="5.3" ry="3.9" fill="#5e3a20"/><path d="M-4 0 L4 0" stroke="#2e1a0c" stroke-width="0.8"/></g><g transform="translate(190.4 155.7) rotate(15)"><ellipse rx="5.3" ry="3.9" fill="#6e4628"/><path d="M-4 0 L4 0" stroke="#2e1a0c" stroke-width="0.8"/></g><g transform="translate(218.3 157.6) rotate(116)"><ellipse rx="5.3" ry="3.9" fill="#7c5232"/><path d="M-4 0 L4 0" stroke="#2e1a0c" stroke-width="0.8"/></g><g transform="translate(164.5 146.6) rotate(93)"><ellipse rx="5.3" ry="3.9" fill="#5e3a20"/><path d="M-4 0 L4 0" stroke="#2e1a0c" stroke-width="0.8"/></g><g transform="translate(165.7 146.6) rotate(96)"><ellipse rx="5.3" ry="3.9" fill="#6e4628"/><path d="M-4 0 L4 0" stroke="#2e1a0c" stroke-width="0.8"/></g><g transform="translate(192.3 154.9) rotate(145)"><ellipse rx="5.3" ry="3.9" fill="#5e3a20"/><path d="M-4 0 L4 0" stroke="#2e1a0c" stroke-width="0.8"/></g><g transform="translate(200.1 138.2) rotate(47)"><ellipse rx="5.3" ry="3.9" fill="#50301a"/><path d="M-4 0 L4 0" stroke="#2e1a0c" stroke-width="0.8"/></g><g transform="translate(180.7 149.9) rotate(153)"><ellipse rx="5.3" ry="3.9" fill="#7c5232"/><path d="M-4 0 L4 0" stroke="#2e1a0c" stroke-width="0.8"/></g><g transform="translate(234.7 149.5) rotate(57)"><ellipse rx="5.3" ry="3.9" fill="#50301a"/><path d="M-4 0 L4 0" stroke="#2e1a0c" stroke-width="0.8"/></g><g transform="translate(211.1 112.9) rotate(20)"><ellipse rx="5.3" ry="3.9" fill="#7c5232"/><path d="M-4 0 L4 0" stroke="#2e1a0c" stroke-width="0.8"/></g><g transform="translate(189.7 137.9) rotate(145)"><ellipse rx="5.3" ry="3.9" fill="#50301a"/><path d="M-4 0 L4 0" stroke="#2e1a0c" stroke-width="0.8"/></g><g transform="translate(144.6 140.4) rotate(87)"><ellipse rx="5.3" ry="3.9" fill="#6e4628"/><path d="M-4 0 L4 0" stroke="#2e1a0c" stroke-width="0.8"/></g><g transform="translate(202.4 133.1) rotate(33)"><ellipse rx="5.3" ry="3.9" fill="#50301a"/><path d="M-4 0 L4 0" stroke="#2e1a0c" stroke-width="0.8"/></g><g transform="translate(193.1 167.2) rotate(159)"><ellipse rx="5.3" ry="3.9" fill="#50301a"/><path d="M-4 0 L4 0" stroke="#2e1a0c" stroke-width="0.8"/></g><g transform="translate(139.2 143.9) rotate(56)"><ellipse rx="5.3" ry="3.9" fill="#6e4628"/><path d="M-4 0 L4 0" stroke="#2e1a0c" stroke-width="0.8"/></g><g transform="translate(189.6 112.8) rotate(169)"><ellipse rx="5.3" ry="3.9" fill="#7c5232"/><path d="M-4 0 L4 0" stroke="#2e1a0c" stroke-width="0.8"/></g><g transform="translate(140.2 149.6) rotate(17)"><ellipse rx="5.3" ry="3.9" fill="#7c5232"/><path d="M-4 0 L4 0" stroke="#2e1a0c" stroke-width="0.8"/></g><g transform="translate(166.1 162.1) rotate(110)"><ellipse rx="5.3" ry="3.9" fill="#6e4628"/><path d="M-4 0 L4 0" stroke="#2e1a0c" stroke-width="0.8"/></g><g transform="translate(239.2 168.0) rotate(43)"><ellipse rx="5.3" ry="3.9" fill="#7c5232"/><path d="M-4 0 L4 0" stroke="#2e1a0c" stroke-width="0.8"/></g><g transform="translate(178.4 161.0) rotate(156)"><ellipse rx="5.3" ry="3.9" fill="#6e4628"/><path d="M-4 0 L4 0" stroke="#2e1a0c" stroke-width="0.8"/></g><g transform="translate(216.0 134.5) rotate(15)"><ellipse rx="5.3" ry="3.9" fill="#7c5232"/><path d="M-4 0 L4 0" stroke="#2e1a0c" stroke-width="0.8"/></g><g transform="translate(205.7 151.5) rotate(61)"><ellipse rx="5.3" ry="3.9" fill="#7c5232"/><path d="M-4 0 L4 0" stroke="#2e1a0c" stroke-width="0.8"/></g><g transform="translate(235.3 140.3) rotate(1)"><ellipse rx="5.3" ry="3.9" fill="#50301a"/><path d="M-4 0 L4 0" stroke="#2e1a0c" stroke-width="0.8"/></g><g transform="translate(155.1 126.4) rotate(12)"><ellipse rx="5.3" ry="3.9" fill="#7c5232"/><path d="M-4 0 L4 0" stroke="#2e1a0c" stroke-width="0.8"/></g><g transform="translate(178.5 162.4) rotate(82)"><ellipse rx="5.3" ry="3.9" fill="#6e4628"/><path d="M-4 0 L4 0" stroke="#2e1a0c" stroke-width="0.8"/></g><g transform="translate(221.7 125.4) rotate(11)"><ellipse rx="5.3" ry="3.9" fill="#6e4628"/><path d="M-4 0 L4 0" stroke="#2e1a0c" stroke-width="0.8"/></g><g transform="translate(152.0 160.2) rotate(40)"><ellipse rx="5.3" ry="3.9" fill="#7c5232"/><path d="M-4 0 L4 0" stroke="#2e1a0c" stroke-width="0.8"/></g><g transform="translate(238.6 165.0) rotate(20)"><ellipse rx="5.3" ry="3.9" fill="#5e3a20"/><path d="M-4 0 L4 0" stroke="#2e1a0c" stroke-width="0.8"/></g><g transform="translate(166.8 130.6) rotate(162)"><ellipse rx="5.3" ry="3.9" fill="#6e4628"/><path d="M-4 0 L4 0" stroke="#2e1a0c" stroke-width="0.8"/></g><g transform="translate(164.6 138.3) rotate(95)"><ellipse rx="5.3" ry="3.9" fill="#50301a"/><path d="M-4 0 L4 0" stroke="#2e1a0c" stroke-width="0.8"/></g><g transform="translate(193.0 132.6) rotate(177)"><ellipse rx="5.3" ry="3.9" fill="#50301a"/><path d="M-4 0 L4 0" stroke="#2e1a0c" stroke-width="0.8"/></g><g transform="translate(145.5 153.6) rotate(18)"><ellipse rx="5.3" ry="3.9" fill="#50301a"/><path d="M-4 0 L4 0" stroke="#2e1a0c" stroke-width="0.8"/></g><g transform="translate(222.5 169.6) rotate(143)"><ellipse rx="5.3" ry="3.9" fill="#7c5232"/><path d="M-4 0 L4 0" stroke="#2e1a0c" stroke-width="0.8"/></g><g transform="translate(235.4 146.1) rotate(135)"><ellipse rx="5.3" ry="3.9" fill="#50301a"/><path d="M-4 0 L4 0" stroke="#2e1a0c" stroke-width="0.8"/></g><g transform="translate(167.2 122.3) rotate(144)"><ellipse rx="5.3" ry="3.9" fill="#6e4628"/><path d="M-4 0 L4 0" stroke="#2e1a0c" stroke-width="0.8"/></g><g transform="translate(208.9 120.1) rotate(121)"><ellipse rx="5.3" ry="3.9" fill="#5e3a20"/><path d="M-4 0 L4 0" stroke="#2e1a0c" stroke-width="0.8"/></g><g transform="translate(149.5 156.8) rotate(168)"><ellipse rx="5.3" ry="3.9" fill="#50301a"/><path d="M-4 0 L4 0" stroke="#2e1a0c" stroke-width="0.8"/></g><g transform="translate(201.6 147.6) rotate(29)"><ellipse rx="5.3" ry="3.9" fill="#50301a"/><path d="M-4 0 L4 0" stroke="#2e1a0c" stroke-width="0.8"/></g><g transform="translate(219.2 117.2) rotate(148)"><ellipse rx="5.3" ry="3.9" fill="#7c5232"/><path d="M-4 0 L4 0" stroke="#2e1a0c" stroke-width="0.8"/></g><g transform="translate(194.2 153.8) rotate(144)"><ellipse rx="5.3" ry="3.9" fill="#5e3a20"/><path d="M-4 0 L4 0" stroke="#2e1a0c" stroke-width="0.8"/></g><g transform="translate(203.7 158.5) rotate(83)"><ellipse rx="5.3" ry="3.9" fill="#5e3a20"/><path d="M-4 0 L4 0" stroke="#2e1a0c" stroke-width="0.8"/></g><g transform="translate(204.0 139.7) rotate(46)"><ellipse rx="5.3" ry="3.9" fill="#5e3a20"/><path d="M-4 0 L4 0" stroke="#2e1a0c" stroke-width="0.8"/></g><g transform="translate(217.4 154.1) rotate(153)"><ellipse rx="5.3" ry="3.9" fill="#50301a"/><path d="M-4 0 L4 0" stroke="#2e1a0c" stroke-width="0.8"/></g><g transform="translate(229.7 148.3) rotate(21)"><ellipse rx="5.3" ry="3.9" fill="#50301a"/><path d="M-4 0 L4 0" stroke="#2e1a0c" stroke-width="0.8"/></g><g transform="translate(135.8 163.9) rotate(105)"><ellipse rx="5.3" ry="3.9" fill="#5e3a20"/><path d="M-4 0 L4 0" stroke="#2e1a0c" stroke-width="0.8"/></g><g transform="translate(143.8 138.1) rotate(175)"><ellipse rx="5.3" ry="3.9" fill="#50301a"/><path d="M-4 0 L4 0" stroke="#2e1a0c" stroke-width="0.8"/></g><g transform="translate(208.2 149.3) rotate(127)"><ellipse rx="5.3" ry="3.9" fill="#50301a"/><path d="M-4 0 L4 0" stroke="#2e1a0c" stroke-width="0.8"/></g><g transform="translate(225.9 143.9) rotate(113)"><ellipse rx="5.3" ry="3.9" fill="#5e3a20"/><path d="M-4 0 L4 0" stroke="#2e1a0c" stroke-width="0.8"/></g><g transform="translate(238.4 143.4) rotate(137)"><ellipse rx="5.3" ry="3.9" fill="#7c5232"/><path d="M-4 0 L4 0" stroke="#2e1a0c" stroke-width="0.8"/></g><g transform="translate(166.4 118.4) rotate(152)"><ellipse rx="5.3" ry="3.9" fill="#7c5232"/><path d="M-4 0 L4 0" stroke="#2e1a0c" stroke-width="0.8"/></g><g transform="translate(214.8 144.1) rotate(68)"><ellipse rx="5.3" ry="3.9" fill="#50301a"/><path d="M-4 0 L4 0" stroke="#2e1a0c" stroke-width="0.8"/></g><g transform="translate(199.4 140.4) rotate(145)"><ellipse rx="5.3" ry="3.9" fill="#7c5232"/><path d="M-4 0 L4 0" stroke="#2e1a0c" stroke-width="0.8"/></g><g transform="translate(214.7 136.6) rotate(178)"><ellipse rx="5.3" ry="3.9" fill="#50301a"/><path d="M-4 0 L4 0" stroke="#2e1a0c" stroke-width="0.8"/></g><g transform="translate(183.4 139.8) rotate(148)"><ellipse rx="5.3" ry="3.9" fill="#6e4628"/><path d="M-4 0 L4 0" stroke="#2e1a0c" stroke-width="0.8"/></g><g transform="translate(143.8 169.6) rotate(102)"><ellipse rx="5.3" ry="3.9" fill="#6e4628"/><path d="M-4 0 L4 0" stroke="#2e1a0c" stroke-width="0.8"/></g><g transform="translate(164.7 169.5) rotate(60)"><ellipse rx="5.3" ry="3.9" fill="#6e4628"/><path d="M-4 0 L4 0" stroke="#2e1a0c" stroke-width="0.8"/></g><g transform="translate(241.0 150.7) rotate(61)"><ellipse rx="5.3" ry="3.9" fill="#5e3a20"/><path d="M-4 0 L4 0" stroke="#2e1a0c" stroke-width="0.8"/></g><g transform="translate(194.4 143.5) rotate(159)"><ellipse rx="5.3" ry="3.9" fill="#6e4628"/><path d="M-4 0 L4 0" stroke="#2e1a0c" stroke-width="0.8"/></g><g transform="translate(213.9 147.3) rotate(11)"><ellipse rx="5.3" ry="3.9" fill="#7c5232"/><path d="M-4 0 L4 0" stroke="#2e1a0c" stroke-width="0.8"/></g><g transform="translate(196.8 145.7) rotate(67)"><ellipse rx="5.3" ry="3.9" fill="#7c5232"/><path d="M-4 0 L4 0" stroke="#2e1a0c" stroke-width="0.8"/></g><g transform="translate(187.8 131.7) rotate(7)"><ellipse rx="5.3" ry="3.9" fill="#7c5232"/><path d="M-4 0 L4 0" stroke="#2e1a0c" stroke-width="0.8"/></g><g transform="translate(189.1 124.8) rotate(32)"><ellipse rx="5.3" ry="3.9" fill="#7c5232"/><path d="M-4 0 L4 0" stroke="#2e1a0c" stroke-width="0.8"/></g><g transform="translate(181.5 147.8) rotate(135)"><ellipse rx="5.3" ry="3.9" fill="#7c5232"/><path d="M-4 0 L4 0" stroke="#2e1a0c" stroke-width="0.8"/></g><g transform="translate(192.4 133.6) rotate(173)"><ellipse rx="5.3" ry="3.9" fill="#7c5232"/><path d="M-4 0 L4 0" stroke="#2e1a0c" stroke-width="0.8"/></g><g transform="translate(145.9 156.7) rotate(130)"><ellipse rx="5.3" ry="3.9" fill="#7c5232"/><path d="M-4 0 L4 0" stroke="#2e1a0c" stroke-width="0.8"/></g><g transform="translate(184.3 116.2) rotate(165)"><ellipse rx="5.3" ry="3.9" fill="#5e3a20"/><path d="M-4 0 L4 0" stroke="#2e1a0c" stroke-width="0.8"/></g><g transform="translate(180.0 147.7) rotate(143)"><ellipse rx="5.3" ry="3.9" fill="#5e3a20"/><path d="M-4 0 L4 0" stroke="#2e1a0c" stroke-width="0.8"/></g><g transform="translate(230.5 142.5) rotate(166)"><ellipse rx="5.3" ry="3.9" fill="#50301a"/><path d="M-4 0 L4 0" stroke="#2e1a0c" stroke-width="0.8"/></g><g transform="translate(148.6 148.8) rotate(117)"><ellipse rx="5.3" ry="3.9" fill="#50301a"/><path d="M-4 0 L4 0" stroke="#2e1a0c" stroke-width="0.8"/></g><g transform="translate(192.2 122.7) rotate(100)"><ellipse rx="5.3" ry="3.9" fill="#7c5232"/><path d="M-4 0 L4 0" stroke="#2e1a0c" stroke-width="0.8"/></g><circle cx="70" cy="152" r="38" fill="#3c3c3c"/><circle cx="71" cy="154" r="32" fill="url(#gr2)" filter="url(#grain)"/><g fill="#4e3019"><ellipse cx="120" cy="150" rx="5" ry="4"/><ellipse cx="112" cy="162" rx="5" ry="4"/><ellipse cx="268" cy="163" rx="5" ry="4"/><ellipse cx="335" cy="160" rx="5" ry="4"/><ellipse cx="352" cy="150" rx="5" ry="4"/><ellipse cx="372" cy="158" rx="5" ry="4"/><ellipse cx="230" cy="52" rx="4" ry="3"/><ellipse cx="205" cy="88" rx="4" ry="3"/></g></svg></div>
<div class="t" style="left:1387.0px;width:400px;text-align:center;top:582.9px;font-size:11.7px;font-weight:400;color:#f0f0f0;">Our Story</div>
<div class="t" style="left:1387.0px;width:400px;text-align:center;top:603.4px;font-size:4.6px;font-weight:400;color:#dddddd;">From humble beginnings as a coffee seed to dominating the landscape</div>
<div class="t" style="left:1387.0px;width:400px;text-align:center;top:610.2px;font-size:4.6px;font-weight:400;color:#dddddd;">and lives of many a place and people, coffee in our opinion is one</div>
<div class="t" style="left:1387.0px;width:400px;text-align:center;top:616.7px;font-size:4.6px;font-weight:400;color:#dddddd;">of the finest ingredients the world has to offer.</div>
<div style="position:absolute;left:1566px;top:632px;width:41px;height:12.5px;box-sizing:border-box;border:1px solid #bbb;border-radius:7px"></div>
<div class="t" style="left:1386.5px;width:400px;text-align:center;top:635.8px;font-size:4.5px;font-weight:700;color:#fff;">Read More</div>
<svg style="left:1419.2px;top:728.1px" width="167.8" height="133.4" viewBox="0 0 167.8 133.4"><defs><filter id="bl1" x="-5%" y="-5%" width="110%" height="110%"><feGaussianBlur stdDeviation="0.8"/></filter></defs><g filter="url(#bl1)"><rect x="-2" y="-2" width="172" height="138" fill="#3a2c24"/><rect x="-2" y="-2" width="12.3" height="80" fill="#201c1a"/><rect x="10.3" y="-2" width="30.2" height="80" fill="#8a4e2a"/><rect x="20" y="-2" width="17" height="80" fill="#a4653c"/><rect x="40.5" y="-2" width="34" height="42" fill="#2a2420"/><rect x="40.5" y="29" width="34" height="2.5" fill="#7a4a2a"/><rect x="50" y="-2" width="2.5" height="42" fill="#7a4a2a"/><rect x="40.5" y="40" width="14" height="35" fill="#7e4a2a"/><rect x="74" y="-2" width="17" height="14" fill="#b88a66"/><rect x="132" y="-2" width="38" height="68" fill="#2c2826"/><rect x="132" y="-2" width="5" height="68" fill="#7a4a2a"/><rect x="132" y="29" width="38" height="4" fill="#7a4a2a"/><rect x="154" y="-2" width="4" height="68" fill="#7a4a2a"/><rect x="140" y="6" width="13" height="18" fill="#6a7478"/><rect x="-2" y="74" width="14.6" height="40" fill="#4a4440"/><path d="M6 135 L14 80 C18 62 30 52 52 50 L70 56 L82 113 L80 135 Z" fill="#b48d6b"/><path d="M56 60 L80 58 L82 113 L58 113 Z" fill="#2e2e30"/><path d="M53 64 C50 40 58 16 76 14 C90 13 96 25 93 50 L88 66 C78 62 64 66 53 64 Z" fill="#8a5e42"/><path d="M58 60 C56 45 60 30 66 24 L64 58 Z" fill="#b08462"/><ellipse cx="78" cy="37" rx="11.5" ry="13.5" fill="#e0b89e"/><path d="M70 44 C74 48 80 48 84 45" stroke="#b06a5a" stroke-width="1.4" fill="none"/><path d="M80 135 L82 60 C88 46 100 42 118 40 C140 42 165 52 168 75 L170 135 Z" fill="#5c6268"/><path d="M82 60 L96 45 L98 113 L84 113 Z" fill="#3a3c40"/><path d="M92 44 L118 40 L120 108 L96 110 Z" fill="#e2eaf2"/><path d="M116 40 L124 46 L128 113 L120 110 Z" fill="#4e5459"/><path d="M87 14 C88 0 104 -4 120 0 C134 6 136 24 130 38 L120 42 L112 22 C104 16 94 16 87 20 Z" fill="#4a3222"/><ellipse cx="101" cy="29" rx="11.5" ry="15.5" fill="#cc967c"/><path d="M90 32 C92 44 104 48 114 42 L112 33 C106 38 96 37 90 32 Z" fill="#5a3c2a"/><ellipse cx="46" cy="77" rx="8.5" ry="9" fill="#d8ae94"/><ellipse cx="104" cy="97" rx="16" ry="12" fill="#c99a82"/><path d="M54 66 L74 66 L72 80 C66 82 60 82 56 80 Z" fill="#f0f0f0"/><path d="M68 83 L90 83 L88 99 C82 101 74 101 70 99 Z" fill="#ededed"/><rect x="-2" y="113" width="172" height="22" fill="#9c8c80"/><rect x="-2" y="124" width="172" height="1.6" fill="#85766a"/><rect x="60" y="113" width="1.5" height="22" fill="#6e6058"/><ellipse cx="36.6" cy="116" rx="21.8" ry="7" fill="#f2f2f2"/><ellipse cx="94" cy="115.5" rx="21.2" ry="7" fill="#f0f0f0"/></g></svg>
<div style="position:absolute;left:1586.7px;top:728.2px;width:168.3px;height:133.3px;background:#f7f7f7"></div>
<div class="t" style="left:1470.5px;width:400px;text-align:center;top:753.0px;font-size:7.9px;font-weight:700;color:#2a2a2a;">Hi, nice to meet you</div>
<div class="t" style="left:1470.5px;width:400px;text-align:center;top:771.5px;font-size:4.5px;font-weight:400;color:#6a6a6a;">Our coffee story is much wider, much higher, and much deeper than</div>
<div class="t" style="left:1470.5px;width:400px;text-align:center;top:778.2px;font-size:4.5px;font-weight:400;color:#6a6a6a;">meets the eye. We began making coffee at Seven Wonders the first week</div>
<div class="t" style="left:1470.5px;width:400px;text-align:center;top:784.9px;font-size:4.5px;font-weight:400;color:#6a6a6a;">of January 2003 on our first espresso machine. Less than 3 months later</div>
<div class="t" style="left:1470.5px;width:400px;text-align:center;top:791.6px;font-size:4.5px;font-weight:400;color:#6a6a6a;">we had won the Irish Barista Championship (the main coffee making</div>
<div class="t" style="left:1470.5px;width:400px;text-align:center;top:798.3px;font-size:4.5px;font-weight:400;color:#6a6a6a;">competition in the world by country) and were off to Boston to</div>
<div class="t" style="left:1470.5px;width:400px;text-align:center;top:805.0px;font-size:4.5px;font-weight:400;color:#6a6a6a;">represent Ireland in the World Barista Championship.</div>
<div class="t" style="left:1470.5px;width:400px;text-align:center;top:819.0px;font-size:9px;font-weight:400;color:#333;font-family:'Liberation Serif',serif;font-style:italic;letter-spacing:-0.3px">James</div>
<div class="t" style="left:1470.5px;width:400px;text-align:center;top:832.2px;font-size:4.6px;font-weight:400;color:#444;"><b>James Frank</b> / CEO</div>
<div style="position:absolute;left:1386px;top:884px;width:401px;height:1px;background:#d9d9d9"></div>
<div class="t " style="left:1408.0px;top:917.6px;font-size:18.9px;font-weight:400;color:#303030;-webkit-text-stroke:0.6px #303030;">About #1</div>
<div style="position:absolute;left:1635px;top:907.3px;width:37px;height:37px;box-sizing:border-box;background:#fff;border:1.2px solid #d3d3d3;border-radius:8px;box-shadow:0 1px 0 #c4c4c4"></div>
<svg style="left:1643.6px;top:917px" width="22" height="18" viewBox="0 0 22 18"><path d="M1.5 9 C4 3.8 7.3 2 11 2 C14.7 2 18 3.8 20.5 9 C18 14.2 14.7 16 11 16 C7.3 16 4 14.2 1.5 9 Z" stroke="#4a4a4a" stroke-width="2" fill="none" stroke-linejoin="round"/><circle cx="11" cy="9" r="3.2" stroke="#4a4a4a" stroke-width="2" fill="none"/></svg>
<div style="position:absolute;left:1684px;top:909px;width:80.5px;height:37px;box-sizing:border-box;background:#fff;border:1.2px solid #d3d3d3;border-radius:9px;box-shadow:0 1px 0 #c4c4c4"></div>
<div class="t" style="left:1684px;width:80.5px;text-align:center;top:918.7px;font-size:17.6px;color:#303030;-webkit-text-stroke:0.3px #303030">Select</div>
<div style="position:absolute;left:539px;top:991.5px;width:401.5px;height:300px;box-sizing:border-box;background:#fff;border:1.2px solid #d9d9d9;border-radius:14px"></div>
<div class="t" style="left:572.3px;top:1011.5px;font-size:6px;font-weight:700;color:#222;letter-spacing:-0.1px">ABOUT US</div>
<div style="position:absolute;left:572.3px;top:1020px;width:30.6px;height:1px;background:#e8d7c0"></div>
<div class="t" style="left:572.3px;top:1026.2px;font-size:10.5px;font-weight:700;color:#2a2a2a;">We Sketch.</div>
<div class="t" style="left:572.3px;top:1039.0px;font-size:10.5px;font-weight:700;color:#2a2a2a;">We Make Models.</div>
<div class="t" style="left:572.3px;top:1051.7px;font-size:10.5px;font-weight:700;color:#2a2a2a;">We Build Prototypes.</div>
<div class="t" style="left:752.6px;top:1027.3px;font-size:5.9px;font-weight:400;color:#555;">We want the future of design to look different from its past.</div>
<div class="t" style="left:752.6px;top:1035.9px;font-size:5.9px;font-weight:400;color:#555;">That's why our design process is a complete collaboration</div>
<div class="t" style="left:752.6px;top:1044.6px;font-size:5.9px;font-weight:400;color:#555;">from pencil and paper, materials and machines, and even</div>
<div class="t" style="left:752.6px;top:1053.3px;font-size:5.9px;font-weight:400;color:#555;">packaging.</div>
<svg style="left:572px;top:1078.6px" width="336" height="130.4" viewBox="0 0 336 130.4"><rect width="336" height="130.4" fill="#e4ded8"/><defs><linearGradient id="wall" x1="0" x2="1"><stop offset="0" stop-color="#e6e0da"/><stop offset="1" stop-color="#d8d0c8"/></linearGradient></defs><rect x="52" width="231.7" height="130.4" fill="url(#wall)"/><rect x="52" y="117" width="231.7" height="13.4" fill="#cfc6bc"/><g stroke="#b8aea4" stroke-width="0.6"><path d="M52 130 L60 117"/><path d="M64 130 L72 117"/><path d="M76 130 L84 117"/><path d="M88 130 L96 117"/><path d="M100 130 L108 117"/><path d="M112 130 L120 117"/><path d="M124 130 L132 117"/><path d="M136 130 L144 117"/><path d="M148 130 L156 117"/><path d="M160 130 L168 117"/><path d="M172 130 L180 117"/><path d="M184 130 L192 117"/><path d="M196 130 L204 117"/><path d="M208 130 L216 117"/><path d="M220 130 L228 117"/><path d="M232 130 L240 117"/><path d="M244 130 L252 117"/><path d="M256 130 L264 117"/><path d="M268 130 L276 117"/><path d="M280 130 L288 117"/></g><rect x="59.7" y="72.4" width="135" height="32.5" fill="#a47c4f"/><rect x="62" y="75" width="130" height="28" fill="#4d4138"/><rect x="85" y="86.5" width="84" height="17.5" fill="#b48f60"/><path d="M127 86.5 L127 104" stroke="#8a6a45" stroke-width="0.8"/><rect x="76" y="82" width="12" height="6" fill="#f0ece8"/><rect x="91" y="82" width="12" height="6" fill="#f0ece8"/><path d="M80 105 L76 121 M172 105 L176 121" stroke="#a47c4f" stroke-width="2"/><path d="M96 70 L95 40 M95 55 L88 38 M95 50 L102 36" stroke="#8a8078" stroke-width="0.7" fill="none"/><circle cx="127" cy="67" r="4.5" fill="#9a9088"/><path d="M164 37 L178 37 L181 51 L161 51 Z" fill="#cdbca3"/><rect x="169" y="51" width="3" height="8" fill="#cfcfcf"/><rect x="158.7" y="58.9" width="18.7" height="13.5" rx="4" fill="#ff0000"/><path d="M165.5 62.3 L171 65.6 L165.5 69 Z" fill="#fff"/><path d="M222 57 C235 55 262 55 268 58 L271 76 L224 77 Z" fill="#c4ad8a"/><path d="M196 74 C215 71 255 71 272 74 C278 80 279 98 277 119 L198 119 C192 108 191 90 193 80 Z" fill="#c9b391"/><rect x="200" y="82" width="50" height="13" rx="5" fill="#d3be9d"/><path d="M250 76 C262 76 272 78 274 82 L277 119 L255 119 Z" fill="#bea783"/><path d="M204 119 L202 127 M248 119 L250 129" stroke="#b89a70" stroke-width="1.8"/></svg>
<div style="position:absolute;left:585px;top:1249.5px;width:28px;height:2px;background:#5a6878;opacity:0.7"></div>
<div style="position:absolute;left:628px;top:1249.5px;width:20px;height:2px;background:#d8b89a;opacity:0.8"></div>
<div style="position:absolute;left:660px;top:1249px;width:50px;height:2.5px;background:#c8946a;opacity:0.8"></div>
<div class="t" style="left:540.0px;width:400px;text-align:center;top:1092.0px;font-size:11px;font-weight:400;color:#ab9b8a;-webkit-text-stroke:0.3px #ab9b8a">We Design Everything We Make.</div>
<div style="position:absolute;left:1908.3px;top:1118.5px;width:65px;height:65px;background:#333;border-radius:50%;box-shadow:0 2px 10px rgba(0,0,0,0.15)"></div>
<svg style="left:1925px;top:1134px" width="32" height="34" viewBox="0 0 32 34"><path d="M4 1 L26 1 C28.5 1 30.5 3 30.5 5.5 L30.5 33 L23 29.5 L5 29.5 C2.5 29.5 0.8 27.5 0.8 25 L0.8 5 C0.8 2.8 2 1 4 1 Z" fill="#fff"/><path d="M6.5 19 C11.5 23.5 20 23.5 25 19" stroke="#333" stroke-width="2.4" fill="none" stroke-linecap="round"/></svg>
<div style="position:absolute;left:1559.5px;top:1192px;width:408px;height:70px;background:#21243f;border-radius:10px 10px 0 0;box-shadow:0 0 70px rgba(0,0,0,0.10)"></div>
<div class="t " style="left:1587.0px;top:1210.7px;font-size:21.6px;font-weight:400;color:#fff;-webkit-text-stroke:0.3px #fff">Help us improve GemPages!</div>
<svg style="left:1914px;top:1214px" width="21" height="16" viewBox="0 0 21 16"><path d="M10.5 2.3 L18.6 14 L2.4 14 Z" fill="#d7e3e3" stroke="#d7e3e3" stroke-width="1.4" stroke-linejoin="round"/></svg>
<div style="position:absolute;left:0px;top:1252px;width:1999px;height:1px;background:#000"></div>
</body></html>
